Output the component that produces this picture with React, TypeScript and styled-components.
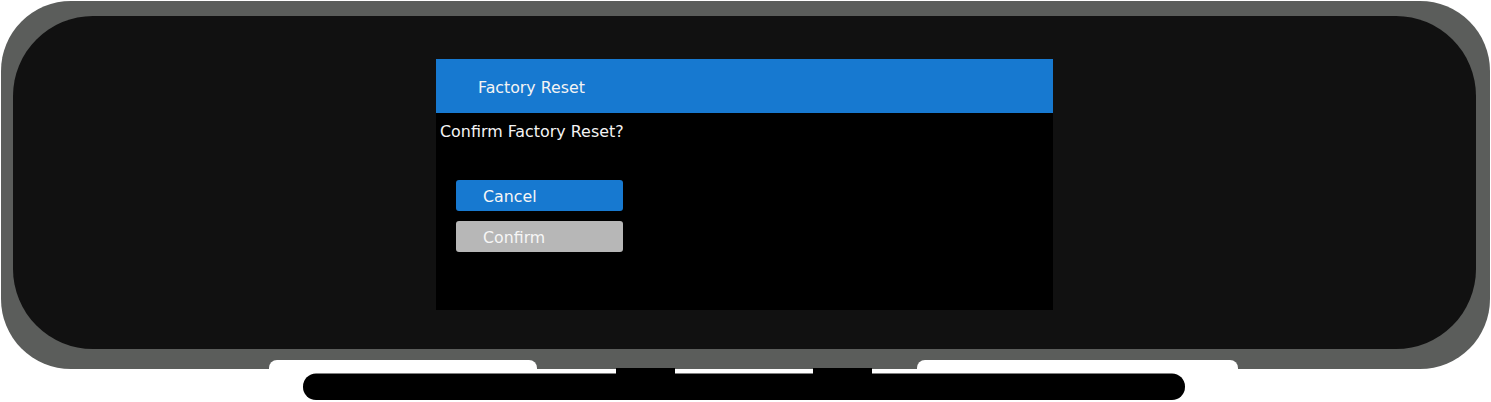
import React from 'react'
import styled, { createGlobalStyle } from 'styled-components'

const GlobalStyle = createGlobalStyle`
  html, body {
    margin: 0;
    padding: 0;
    background: #ffffff;
  }
  body {
    font-family: 'DejaVu Sans', Verdana, sans-serif;
    overflow: hidden;
  }
`

const Device = styled.div`
  width: 1491px;
  height: 402px;
  padding-top: 1px;
  box-sizing: border-box;
  display: flex;
  flex-direction: column;
`

const Frame = styled.div`
  margin: 0 1px;
  height: 368px;
  box-sizing: border-box;
  background: #5b5d5b;
  border-radius: 70px;
  padding: 15px 14px 20px 12px;
`

const Bezel = styled.div`
  height: 100%;
  box-sizing: border-box;
  background: #111111;
  border-radius: 80px;
  display: flex;
  justify-content: center;
  align-items: flex-start;
  padding-top: 43px;
`

const Screen = styled.div`
  width: 617px;
  height: 251px;
  background: #000000;
  display: flex;
  flex-direction: column;
`

const Header = styled.div`
  height: 54px;
  box-sizing: border-box;
  background: #1779d0;
  display: flex;
  align-items: center;
  padding: 3px 0 0 42px;
  color: #f4f4f4;
  font-size: 15.8px;
`

const Message = styled.div`
  margin: 9px 0 0 4px;
  color: #f4f4f4;
  font-size: 15.9px;
  line-height: 19px;
`

const ButtonList = styled.div`
  display: flex;
  flex-direction: column;
  gap: 10px;
  margin: 39px 0 0 20px;
`

const MenuButton = styled.div<{ $active?: boolean }>`
  width: 167px;
  height: 31px;
  box-sizing: border-box;
  border-radius: 3px;
  background: ${(p) => (p.$active ? '#1779d0' : '#b7b7b7')};
  color: #f6f6f6;
  font-size: 15.8px;
  display: flex;
  align-items: center;
  padding: 2px 0 0 27px;
`

const Stand = styled.svg`
  display: block;
  margin-top: -9px;
`

export default function App() {
  return (
    <>
      <GlobalStyle />
      <Device>
        <Frame>
          <Bezel>
            <Screen>
              <Header>Factory Reset</Header>
              <Message>Confirm Factory Reset?</Message>
              <ButtonList>
                <MenuButton $active>Cancel</MenuButton>
                <MenuButton>Confirm</MenuButton>
              </ButtonList>
            </Screen>
          </Bezel>
        </Frame>
        <Stand width="1491" height="42" viewBox="0 0 1491 42">
          <rect x="269" y="0" width="268" height="20" rx="8" fill="#ffffff" />
          <rect x="917" y="0" width="321" height="20" rx="8" fill="#ffffff" />
          <rect x="616" y="8" width="59" height="8" fill="#000000" />
          <rect x="813" y="8" width="59" height="8" fill="#000000" />
          <rect x="303" y="13.5" width="882" height="26.5" rx="13" fill="#000000" />
        </Stand>
      </Device>
    </>
  )
}
